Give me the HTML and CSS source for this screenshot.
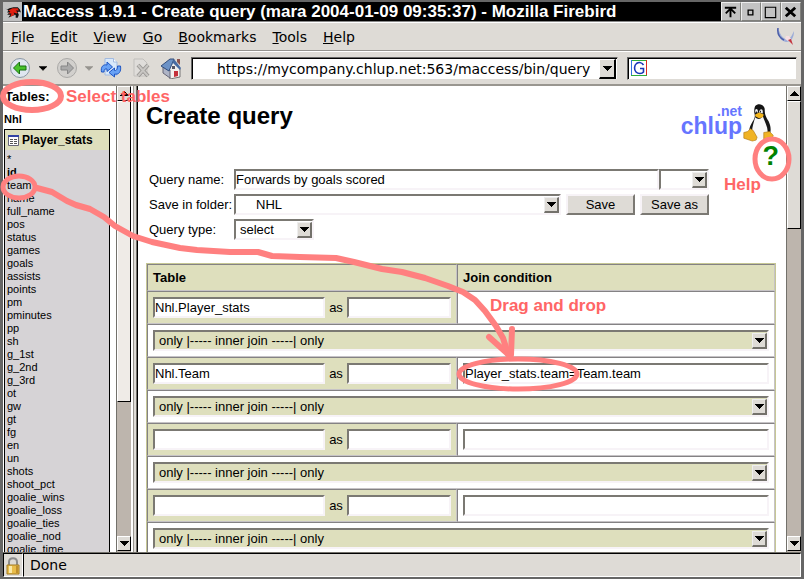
FILE: index.html
```html
<!DOCTYPE html>
<html lang="en">
<head>
<meta charset="utf-8">
<title>Maccess 1.9.1 - Create query</title>
<link rel="stylesheet" href="styles.css">
</head>
<body>
<svg class="defs" width="0" height="0" aria-hidden="true">
  <symbol id="down" viewBox="0 0 9 5"><path d="M0 0h9v1H8v1H7v1H6v1H5v1H4V4H3V3H2V2H1V1H0z"/></symbol>
  <symbol id="up" viewBox="0 0 9 5"><path d="M0 5h9V4H8V3H7V2H6V1H5V0H4v1H3v1H2v1H1v1H0z"/></symbol>
</svg>
<div class="window">
  <header class="titlebar">
    <svg class="app-icon" viewBox="0 0 18 18"><path d="M2 6l2 1 2-1 4-1 4 0 2 2 1 3-2-1-1 1 1 2-1 3-2 0 0-3-3 1-4 2 2-3-3 0 2-2-2 0 1-2z" fill="#111"/><path d="M3 7l2 1 4-2 5 0 1 2-3 0 2 2-1 1-3-1 1 2-4 2 1-3-3 0 2-2z" fill="#e02010"/></svg>
    <h1 class="window-title">Maccess 1.9.1 - Create query (mara 2004-01-09 09:35:37) - Mozilla Firebird</h1>
    <button class="wm" aria-label="Shade"><svg viewBox="0 0 18 18"><path d="M3 5h12M9 15V6M4 11l5-5 5 5" fill="none" stroke="#000" stroke-width="2"/></svg></button>
    <button class="wm" aria-label="Minimize"><svg viewBox="0 0 18 18"><path d="M6.500 7.500h5v5h-5z" fill="none" stroke="#000" stroke-width="1.400"/></svg></button>
    <button class="wm" aria-label="Maximize"><svg viewBox="0 0 18 18"><path d="M3.500 4.500h11v11h-11z" fill="none" stroke="#000" stroke-width="1.200"/></svg></button>
    <button class="wm" aria-label="Close"><svg viewBox="0 0 18 18"><path d="M4 5l10 9M14 5L4 14" fill="none" stroke="#000" stroke-width="3"/></svg></button>
  </header>

  <nav class="menubar">
    <button><u>F</u>ile</button><button><u>E</u>dit</button><button><u>V</u>iew</button><button><u>G</u>o</button><button><u>B</u>ookmarks</button><button><u>T</u>ools</button><button><u>H</u>elp</button>
    <svg class="throbber" viewBox="0 0 20 20"><path d="M2 1c-1 6 2 13 8 14 5 0 8-4 8-11-2 4-3 7-6 8-5 1-8-5-10-11z" fill="#9cacd8"/><path d="M2 1c-1 6 2 10 6 12" stroke="#4b5ea8" fill="none" stroke-width="1.500"/><path d="M10 9l3 0 2 3-3 2-3-2z" fill="#f6dfe2"/><path d="M12 13l3-1 2 6z" fill="#c33440"/></svg>
  </nav>

  <div class="toolbar">
    <button class="tool" aria-label="Back"><svg viewBox="0 0 22 22"><circle cx="11" cy="11" r="9.500" fill="#dfe6f0" stroke="#8b98a6"/><path d="M4.500 11l6-6v4H17v4h-6.500v4z" fill="#48c22c" stroke="#176f12"/></svg></button>
    <button class="drop" aria-label="Back history"><svg class="arrow"><use href="#down"/></svg></button>
    <button class="tool" aria-label="Forward"><svg viewBox="0 0 22 22"><circle cx="11" cy="11" r="9.500" fill="#d2d0cd" stroke="#aaa9a7"/><path d="M17.500 11l-6-6v4H5v4h6.500v4z" fill="#aaa" stroke="#868686"/></svg></button>
    <button class="drop off" aria-label="Forward history"><svg class="arrow"><use href="#down"/></svg></button>
    <button class="tool" aria-label="Reload"><svg viewBox="0 0 22 22"><path d="M5 1.500h8.500l3.500 3.500v13H5z" fill="#d9e9fb" stroke="#a3bbe0"/><path d="M13.500 1.500v3.500h3.500" fill="#fff" stroke="#a3bbe0"/><path d="M1.500 15C.5 10 3 7 7 8V5l5.500 5L7 14.500V12c-2-.5-3 .5-3 3z" fill="#69a2f5" stroke="#1f56c4"/><path d="M20.500 9c1 6-2 9-6 8v3L9 15.500 14.500 11v2.500c2 .5 3-1.500 3-4.500z" fill="#69a2f5" stroke="#1f56c4"/></svg></button>
    <button class="tool stop" aria-label="Stop"><svg viewBox="0 0 22 22"><path d="M4 2h9l4 4v13H4z" fill="#dfddda" stroke="#c1bfbc"/><path d="M8 8l10 11M18 8L8 19" stroke="#999794" stroke-width="4"/><path d="M8 8l10 11M18 8L8 19" stroke="#c8c6c3" stroke-width="2"/></svg></button>
    <button class="tool" aria-label="Home"><svg viewBox="0 0 22 22"><path d="M8 10l6-6 6 8v8l-10 2z" fill="#f3f0ee" stroke="#777"/><path d="M3 10l7 3v8l-7-5z" fill="#aeb4c6" stroke="#667"/><path d="M1 9l9-7 4 0-5 12z" fill="#6c92c6" stroke="#344f7c"/><path d="M14 2l7 9-1 2-7-7-3 6z" fill="#486ca4"/><path d="M17 2h3v6l-3-3z" fill="#8c5550"/><path d="M14 14h4v5l-4 1z" fill="#c4303a"/><path d="M12 9h3v3h-3z" fill="#556"/></svg></button>
    <div class="address">
      <input aria-label="Address" value="https://mycompany.chlup.net:563/maccess/bin/query">
      <button class="arrow-box" aria-label="Address history"><svg class="arrow"><use href="#down"/></svg></button>
    </div>
    <div class="search">
      <svg class="google" viewBox="0 0 16 16"><path fill="#fff" d="M0 0h16v16H0z"/><path d="M0 .5h16" stroke="#2fae3c"/><path d="M.5 0v16" stroke="#3070e0"/><path d="M15.500 0v16" stroke="#d82c20"/><path d="M0 15.500h16" stroke="#2fae3c"/><path d="M12.500 5C11 2.500 8 2 5.500 3.500 3 5.500 3 10 5 12c2 2 6 2 7.500 0V8.500H9" fill="none" stroke="#1836b8" stroke-width="1.600"/></svg>
      <input aria-label="Search">
    </div>
  </div>

  <div class="frames">
    <aside class="side">
      <div class="side-page">
        <h2 class="side-title">Tables:</h2>
        <h3 class="schema">Nhl</h3>
        <section class="table-box">
          <h4><svg viewBox="0 0 11 11"><path fill="#fff" stroke="#667" d="M.5 .5h10v10H.5z"/><path fill="#3344a4" d="M0 0h11v2H0z"/><path d="M2 4.500h3m1 0h3M2 6.500h3m1 0h3M2 8.500h3m1 0h3" stroke="#555"/></svg>Player_stats</h4>
          <ul>
            <li>*</li><li><b>id</b></li><li>team</li><li>name</li><li>full_name</li><li>pos</li><li>status</li><li>games</li><li>goals</li><li>assists</li><li>points</li><li>pm</li><li>pminutes</li><li>pp</li><li>sh</li><li>g_1st</li><li>g_2nd</li><li>g_3rd</li><li>ot</li><li>gw</li><li>gt</li><li>fg</li><li>en</li><li>un</li><li>shots</li><li>shoot_pct</li><li>goalie_wins</li><li>goalie_loss</li><li>goalie_ties</li><li>goalie_nod</li><li>goalie_time</li>
          </ul>
        </section>
      </div>
      <div class="scroll light">
        <button aria-label="Scroll up"><svg class="arrow"><use href="#up"/></svg></button>
        <div class="track side-track"><div class="thumb"></div><div class="rest"></div></div>
        <button aria-label="Scroll down"><svg class="arrow"><use href="#down"/></svg></button>
      </div>
    </aside>
    <div class="splitter"></div>
    <main class="main">
      <div class="page">
        <div class="page-head">
          <h2>Create query</h2>
          <div class="brand">
            <div class="logo"><span class="net">.net</span><span class="chlup">chlup</span></div>
            <svg class="tux" viewBox="0 0 34 40"><path d="M13 2c3-3 9-2 10 3 0 6 1 8 4 13 3 6 3 12 0 17H9c-4-6-2-11 1-16 3-5 3-6 2-10 0-3 0-5 1-7z" fill="#151515"/><path d="M13 14c3 3 6 2 8-1 2 6 6 12 5 18-2 6-11 8-15 3-3-5 0-13 2-20z" fill="#f8f8f8"/><path d="M13 6c2-2 3 0 3 3h-3zM17 9c0-4 4-5 4-1v2z" fill="#eee"/><path d="M14 8h1v2h-1zM18 7h1v2h-1z" fill="#111"/><path d="M13 11l4-2 5 2-1 3-4 1-4-2z" fill="#f3b51b"/><path d="M1 30l4-1 3-3 3 2 4 7-1 3-4 1-9-3z" fill="#f0b323" stroke="#a66f0c" stroke-width=".6"/><path d="M22 30l6-1 4 4-1 3-5 3-4-1z" fill="#f0b323" stroke="#a66f0c" stroke-width=".6"/></svg>
            <a href="#help" class="help" aria-label="Help">?</a>
          </div>
        </div>

        <form class="query" onsubmit="return false">
          <div class="meta">
            <label for="qname">Query name:</label>
            <div class="fields">
              <input class="field grow" id="qname" value="Forwards by goals scored">
              <span class="select small"><select aria-label="Saved queries"><option></option></select><span class="arrow-box"><svg class="arrow"><use href="#down"/></svg></span></span>
            </div>
            <label for="folder">Save in folder:</label>
            <div class="fields spaced">
              <span class="select grow folder"><select id="folder"><option>NHL</option></select><span class="arrow-box"><svg class="arrow"><use href="#down"/></svg></span></span>
              <button class="push">Save</button><button class="push">Save as</button>
            </div>
            <label for="qtype">Query type:</label>
            <div class="fields">
              <span class="select type"><select id="qtype"><option>select</option></select><span class="arrow-box"><svg class="arrow"><use href="#down"/></svg></span></span>
            </div>
          </div>

          <table class="joins">
            <colgroup><col class="c1"><col></colgroup>
            <thead><tr><th>Table</th><th>Join condition</th></tr></thead>
            <tbody>
              <tr><td class="src"><div class="pair"><input class="field grow" id="t1" aria-label="Table 1" value="Nhl.Player_stats"><label for="a1">as</label><input class="field alias" id="a1"></div></td><td></td></tr>
              <tr><td colspan="2"><span class="select join"><select aria-label="Join type 1"><option>only |----- inner join -----| only</option></select><span class="arrow-box"><svg class="arrow"><use href="#down"/></svg></span></span></td></tr>
              <tr><td class="src"><div class="pair"><input class="field grow" id="t2" aria-label="Table 2" value="Nhl.Team"><label for="a2">as</label><input class="field alias" id="a2"></div></td><td><input class="field full" aria-label="Join condition 2" value="Player_stats.team=Team.team"></td></tr>
              <tr><td colspan="2"><span class="select join"><select aria-label="Join type 2"><option>only |----- inner join -----| only</option></select><span class="arrow-box"><svg class="arrow"><use href="#down"/></svg></span></span></td></tr>
              <tr><td class="src"><div class="pair"><input class="field grow" id="t3" aria-label="Table 3"><label for="a3">as</label><input class="field alias" id="a3"></div></td><td><input class="field full" aria-label="Join condition 3"></td></tr>
              <tr><td colspan="2"><span class="select join"><select aria-label="Join type 3"><option>only |----- inner join -----| only</option></select><span class="arrow-box"><svg class="arrow"><use href="#down"/></svg></span></span></td></tr>
              <tr><td class="src"><div class="pair"><input class="field grow" id="t4" aria-label="Table 4"><label for="a4">as</label><input class="field alias" id="a4"></div></td><td><input class="field full" aria-label="Join condition 4"></td></tr>
              <tr><td colspan="2"><span class="select join"><select aria-label="Join type 4"><option>only |----- inner join -----| only</option></select><span class="arrow-box"><svg class="arrow"><use href="#down"/></svg></span></span></td></tr>
            </tbody>
          </table>
        </form>
      </div>
      <div class="scroll">
        <button aria-label="Scroll up"><svg class="arrow"><use href="#up"/></svg></button>
        <div class="track main-track"><div class="thumb"></div><div class="rest"></div></div>
        <button aria-label="Scroll down"><svg class="arrow"><use href="#down"/></svg></button>
      </div>
    </main>
  </div>

  <footer class="status">
    <span class="lock"><svg viewBox="0 0 14 18"><path d="M3 9V5c0-5 8-5 8 0v4" fill="none" stroke="#8c8c8c" stroke-width="2"/><path d="M1 8h12v9H1z" fill="#e9bd4a" stroke="#a27b22"/><path d="M3 9h3v7H3z" fill="#fae9a8"/><path d="M10 9h2v7h-2z" fill="#c08f2c"/></svg></span>
    <span class="message">Done</span>
  </footer>
</div>

<svg class="notes" viewBox="0 0 804 579" width="804" height="579">
  <g fill="none" stroke="#ff8080" stroke-width="6" stroke-linecap="round" stroke-linejoin="round">
    <ellipse cx="32" cy="96" rx="29" ry="14"/>
    <ellipse cx="19" cy="187" rx="16" ry="11" stroke-width="5"/>
    <ellipse cx="772" cy="159" rx="17" ry="20" stroke-width="5"/>
    <ellipse cx="518" cy="374" rx="59" ry="15" stroke-width="5"/>
    <path d="M37 188L52 192 67 201 76 205 90 209 104 217 115 226 133 236 152 242 180 248 197 250 230 252 258 252 272 256 300 257 336 258 354 262 382 269 402 272 425 278 448 286 463 292 475 300 485 311 496 326 503 338 508 354"/>
    <path d="M489 337L509 355M512 329L511 355"/>
  </g>
  <g class="note-text">
    <text x="66" y="102">Select tables</text>
    <text x="490" y="311">Drag and drop</text>
    <text x="724" y="190">Help</text>
  </g>
</svg>
</body>
</html>
```
FILE: styles.css
```css
* { box-sizing: border-box; }
html, body { margin: 0; height: 100%; }
body { overflow: hidden; font: 13px/15px "Liberation Sans", Arial, sans-serif; color: #000; }
h1, h2, h3, h4, ul { margin: 0; padding: 0; font-weight: bold; }
button, input, select { font: inherit; color: inherit; margin: 0; border-radius: 0; appearance: none; outline: 0; }
svg { display: block; }
.defs { position: absolute; }
.arrow { width: 9px; height: 5px; }

.window { height: 100vh; display: flex; flex-direction: column; background: #dedbd6; border: solid #666; border-width: 2px 3px; }

.titlebar { display: flex; height: 20px; flex: none; background: #000; border-bottom: 1px solid #888; }
.app-icon { width: 19px; height: 19px; background: #c0c0c0; flex: none; }
.window-title { flex: 1; padding-left: 1px; color: #fff; font-size: 17px; line-height: 19px; white-space: nowrap; overflow: hidden; }
.wm { width: 20px; height: 19px; padding: 0; background: #c3c3c3; border: 1px solid; border-color: #eee #80807c #80807c #eee; }
.wm svg { width: 17px; height: 17px; }

.menubar { display: flex; align-items: center; flex: none; height: 29px; border-top: 1px solid #fff; border-bottom: 1px solid #94928e; font: 14px/18px "DejaVu Sans", sans-serif; }
.menubar button { padding: 0 8px; border: 0; background: none; }
.throbber { width: 20px; height: 20px; margin-left: auto; margin-right: 5px; }

.toolbar { display: flex; align-items: center; flex: none; height: 35px; padding: 0 4px 0 6px; border-top: 1px solid #fff; border-bottom: 2px solid #999690; font: 14px/18px "DejaVu Sans", sans-serif; }
.tool { width: 22px; height: 22px; padding: 0; border: 0; background: none; flex: none; }
.tool + .tool { margin-left: 8px; }
.drop { width: 25px; padding: 0 8px; border: 0; background: none; flex: none; }
.drop .arrow { width: 8px; }
.off { width: 22px; padding: 0 7px; }
.off .arrow { fill: #96948f; }
.address, .search { display: flex; align-items: center; height: 23px; background: #fff; border: 1px solid; border-color: #666 #dedbd6 #dedbd6 #666; box-shadow: inset 1px 1px #000; }
.address { flex: 1; margin-left: 9px; padding: 1px 1px 0 1px; min-width: 0; }
.address input { flex: 1; min-width: 0; padding: 0 0 0 24px; border: 0; background: none; }
.search { width: 170px; margin-left: 9px; padding-left: 3px; flex: none; }
.search input { flex: 1; min-width: 0; border: 0; background: none; }
.google { width: 16px; height: 16px; }

.arrow-box { display: flex; align-items: center; justify-content: center; padding: 0; width: 15px; height: 16px; background: #dedbd6; border: solid; border-width: 1px 2px 2px 1px; border-color: #eee #73716b #73716b #eee; pointer-events: none; }
.address .arrow-box { width: 17px; height: 20px; border-color: #fff #000 #000 #fff; }

.frames { flex: 1; min-height: 0; display: flex; background: #fff; }
.side { width: 128px; display: flex; flex: none; }
.side-page { flex: 1; overflow: hidden; padding: 4px 6px 0 1px; font-size: 11px; }
.side-title { font-size: 13px; line-height: 14px; padding-left: 1px; }
.schema { font-size: 11px; line-height: 14px; margin-top: 8px; }
.table-box { margin-top: 3px; border: 1px solid #000; background: #d6d3d6; }
.table-box h4 { display: flex; align-items: center; gap: 3px; height: 20px; padding-left: 3px; background: #dedfbd; font-size: 12px; line-height: 20px; }
.table-box h4 svg { width: 11px; height: 11px; }
.table-box ul { list-style: none; padding: 3px 2px; font-weight: normal; line-height: 13px; }

.scroll { width: 15px; display: flex; flex-direction: column; flex: none; border-left: 1px solid #73716b; background: #bdb5ad; padding-bottom: 1px; }
.scroll button { display: flex; align-items: center; justify-content: center; height: 15px; flex: none; padding: 0; background: #dedbd6; border: 1px solid; border-color: #fff #000 #000 #fff; }
.track { flex: 1; display: flex; flex-direction: column; }
.thumb { background: #dedbd6; border: 1px solid; border-color: #fff #000 #000 #fff; }
.light .thumb { background: #efebe7; }
.side-track .thumb { flex: 69; }
.side-track .rest { flex: 31; }
.main-track .thumb { flex: 29; }
.main-track .rest { flex: 71; }
.splitter { width: 7px; background: #dedbd6; border-left: 2px solid #fff; border-right: 1px solid #000; box-shadow: inset 1px 0 #999690, inset -1px 0 #73716b; }

.main { flex: 1; min-width: 0; display: flex; }
.page { flex: 1; min-width: 0; overflow: hidden; padding: 16px 10px 0 8px; }
.page-head { display: flex; justify-content: space-between; height: 67px; }
.page-head h2 { font-size: 24px; line-height: 27px; }
.brand { display: grid; grid-template-columns: auto 34px; align-content: start; padding-top: 2px; color: #6675ff; }
.logo { display: flex; flex-direction: column; font-weight: bold; }
.net { align-self: flex-end; font-size: 14px; line-height: 14px; }
.chlup { font-size: 23px; line-height: 16px; }
.tux { width: 34px; height: 38px; }
.help { grid-column: 2; justify-self: end; margin-right: -3px; color: #008200; font-size: 27px; line-height: 28px; font-weight: bold; text-decoration: none; }

.meta { display: grid; grid-template-columns: 81px minmax(0, 475px); gap: 4px; align-items: center; padding-left: 3px; }
.meta label { white-space: nowrap; }
.fields { display: flex; }
.spaced { gap: 5px; }
.grow { flex: 1; min-width: 0; }
.field, .select { height: 21px; border: 2px solid; border-color: #7b7973 #f7f3f7 #f7f3f7 #7b7973; background: #fff; }
.field { padding: 0; }
.full { display: block; width: 100%; }
.select { display: grid; }
.select > * { grid-area: 1 / 1; }
.select select { width: 100%; min-width: 0; border: 0; padding: 0 18px 0 4px; background: none; }
.select .arrow-box { justify-self: end; align-self: center; }
.small { width: 50px; }
.folder select { padding-left: 20px; }
.type { width: 80px; }
.push { width: 69px; height: 21px; padding: 0; background: #dedbd6; border: 2px solid; border-color: #f7f3f7 #7b7973 #7b7973 #f7f3f7; }

.joins { width: 100%; margin-top: 23px; table-layout: fixed; border-spacing: 0; border: 1px solid #c6c794; }
.c1 { width: 310px; }
.joins th, .joins td { padding: 5px; border: 1px solid; border-color: #848284 #c6c3c6 #c6c3c6 #848284; }
.joins th { height: 27px; padding: 0 5px; text-align: left; background: #dedfbd; }
.joins .src, .joins .join { background: #dedfbd; }
.pair { display: flex; align-items: center; gap: 4px; }
.pair label { width: 14px; text-align: center; }
.alias { width: 104px; }

.status { display: flex; flex: none; height: 25px; font: 14px/23px "DejaVu Sans", sans-serif; border-top: 1px solid #73716b; }
.lock { width: 20px; padding: 3px 2px; border: 1px solid; border-color: #000 #fff #fff #000; }
.lock svg { width: 14px; height: 18px; }
.message { flex: 1; padding-left: 6px; border: 1px solid; border-color: #000 #fff #fff #000; }

.notes { position: absolute; left: 0; top: 0; pointer-events: none; }
.note-text { font: bold 17px "Liberation Sans", sans-serif; fill: #ff6666; }
```
